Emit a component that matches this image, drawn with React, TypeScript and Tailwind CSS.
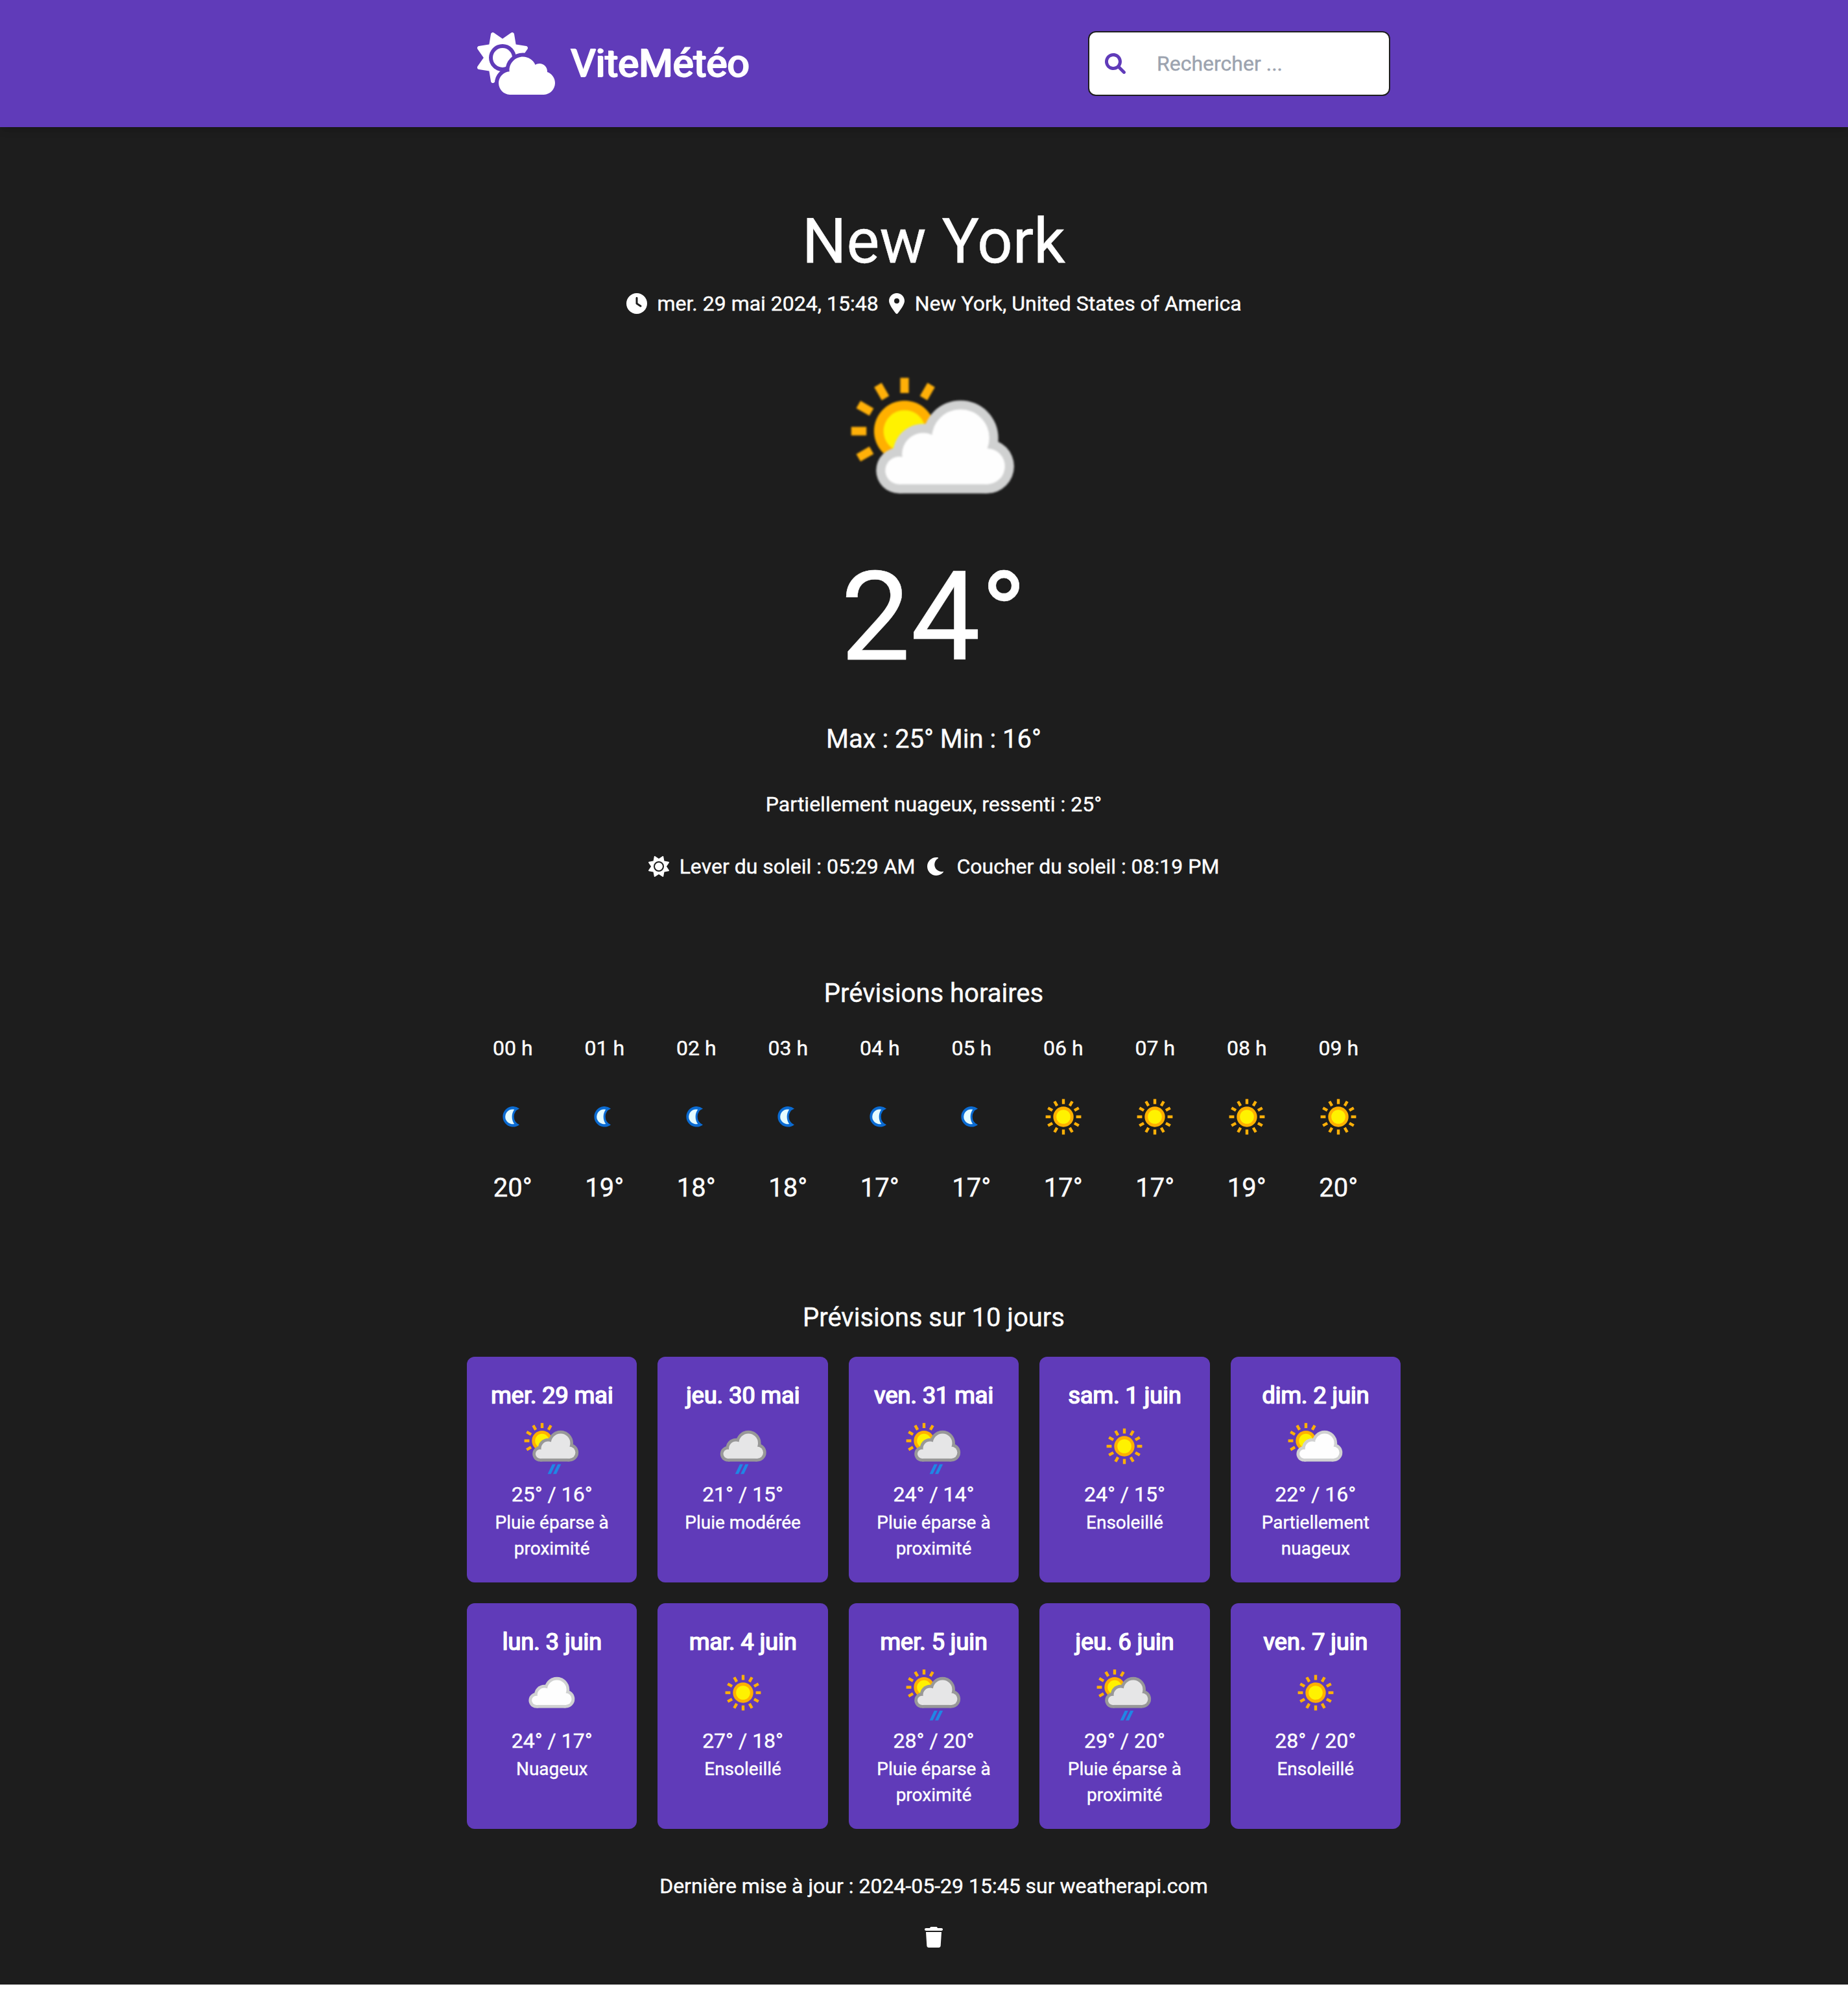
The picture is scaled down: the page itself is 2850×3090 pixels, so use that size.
import React from "react";
import { FaClock, FaLocationDot, FaSun, FaTrash } from "react-icons/fa6";

type Condition = "partly" | "showers" | "rain" | "cloudy" | "sunny" | "clear-night";

const ALL_RAYS = [0, 30, 60, 90, 120, 150, 180, 210, 240, 270, 300, 330];
const LEFT_RAYS = [0, 30, 240, 270, 300, 330];

const LOGO_CLOUD =
  "M575.2 325.7c.2-1.9.8-3.7.8-5.6 0-35.3-28.7-64-64-64-12.6 0-24.2 3.8-34.1 10-17.6-38.8-56.5-66-101.9-66-61.8 0-112 50.1-112 112 0 3 .7 5.8.9 8.7-49.6 3.7-88.9 44.7-88.9 95.3 0 53 43 96 96 96h272c53 0 96-43 96-96 0-42.1-27.2-77.4-64.8-90.4z";

function LogoIcon({ className }: { className: string }) {
  return (
    <svg viewBox="0 0 640 512" fill="currentColor" className={className}>
      <mask id="logo-sun" maskUnits="userSpaceOnUse" x="0" y="0" width="640" height="512">
        <rect width="640" height="512" fill="white" />
        <circle cx="208" cy="208" r="112" fill="black" />
        <circle cx="208" cy="208" r="80" fill="white" />
        <path d={LOGO_CLOUD} fill="black" stroke="black" strokeWidth="64" />
      </mask>
      <path
        mask="url(#logo-sun)"
        d="M294.2 1.2c5.1 2.1 8.7 6.7 9.6 12.1l14.1 84.7 84.7 14.1c5.4.9 10 4.5 12.1 9.6s1.5 10.9-1.6 15.4L363.5 208l49.6 70.8c3.1 4.5 3.7 10.3 1.6 15.4s-6.7 8.7-12.1 9.6l-84.7 14.1-14.1 84.7c-.9 5.4-4.5 10-9.6 12.1s-10.9 1.5-15.4-1.6L208 363.5l-70.8 49.6c-4.5 3.2-10.3 3.8-15.4 1.6s-8.7-6.7-9.6-12.1L98.1 317.9 13.4 303.8c-5.4-.9-10-4.5-12.1-9.6s-1.5-10.9 1.6-15.4L52.5 208 2.9 137.2c-3.2-4.5-3.8-10.3-1.6-15.4s6.7-8.7 12.1-9.6L98.1 98.1l14.1-84.7c.9-5.4 4.5-10 9.6-12.1s10.9-1.5 15.4 1.6L208 52.5 278.8 2.9c4.5-3.2 10.3-3.8 15.4-1.7z"
      />
      <path d={LOGO_CLOUD} />
    </svg>
  );
}

function SearchIcon({ className }: { className: string }) {
  return (
    <svg viewBox="0 0 512 512" fill="currentColor" className={className}>
      <path d="M500.3 443.7l-119.7-119.7c27.22-40.41 40.65-90.9 33.46-144.7C401.8 87.79 326.8 13.32 235.2 1.723C99.01-15.51-15.51 99.01 1.724 235.2c11.6 91.64 86.08 166.7 177.6 178.9c53.8 7.189 104.3-6.236 144.7-33.46l119.7 119.7c15.62 15.62 40.95 15.62 56.57 0C515.9 484.7 515.9 459.3 500.3 443.7zM79.1 208c0-70.58 57.42-128 128-128s128 57.42 128 128c0 70.58-57.42 128-128 128S79.1 278.6 79.1 208z" />
    </svg>
  );
}

function MoonIcon({ className }: { className: string }) {
  return (
    <svg viewBox="0 0 512 512" fill="currentColor" className={className}>
      <path d="M32 256c0-123.8 100.3-224 223.8-224c11.36 0 29.7 1.668 40.9 3.746c9.616 1.777 11.75 14.63 3.279 19.44C245 86.5 211.2 144.6 211.2 207.8c0 109.7 99.71 193 208.3 172.3c9.561-1.805 16.28 9.324 10.11 16.95C387.9 448.6 324.8 480 255.8 480C132.1 480 32 379.6 32 256z" />
    </svg>
  );
}

function SunShape({ cx, cy, rays }: { cx: number; cy: number; rays: number[] }) {
  return (
    <g>
      {rays.map((a) => (
        <rect
          key={a}
          x={cx - 1.1}
          y={cy - 13.7}
          width={2.2}
          height={3.9}
          fill="#ffb008"
          transform={`rotate(${a} ${cx} ${cy})`}
        />
      ))}
      <circle cx={cx} cy={cy} r={7.85} fill="#ffb000" />
      <circle cx={cx} cy={cy} r={5.4} fill="#fff200" />
    </g>
  );
}

function CloudShape({ dx, rim, fill }: { dx: number; rim: string; fill: string }) {
  return (
    <g transform={`translate(${dx} 0)`}>
      <g fill={rim}>
        <circle cx={23} cy={37.9} r={5.9} />
        <circle cx={29.2} cy={33.7} r={7.8} />
        <circle cx={38.8} cy={29.6} r={9.7} />
        <circle cx={45.6} cy={36.85} r={6.95} />
        <rect x={23} y={35} width={22.6} height={8.8} />
      </g>
      <g fill={fill}>
        <circle cx={23} cy={37.9} r={3.55} />
        <circle cx={29.2} cy={33.7} r={5.45} />
        <circle cx={38.8} cy={29.6} r={7.4} />
        <circle cx={45.6} cy={36.85} r={4.6} />
        <rect x={23} y={35} width={22.6} height={6.45} />
      </g>
    </g>
  );
}

function Rain({ dx }: { dx: number }) {
  return (
    <g fill="#1f87e5" transform={`translate(${dx} 0)`}>
      <path d="M32.4 45.9h2.5l-3.6 7.5h-2.5z" />
      <path d="M36.6 45.9h2.5l-3.6 7.5h-2.5z" />
    </g>
  );
}

function WeatherIcon({ kind, className }: { kind: Condition; className: string }) {
  return (
    <svg viewBox="0 0 64 64" className={className}>
      {kind === "sunny" && <SunShape cx={32} cy={32} rays={ALL_RAYS} />}
      {(kind === "partly" || kind === "showers") && (
        <SunShape cx={24.5} cy={27.8} rays={LEFT_RAYS} />
      )}
      {kind === "partly" && <CloudShape dx={0.1} rim="#d0d1d1" fill="#fefefe" />}
      {kind === "cloudy" && <CloudShape dx={-2.9} rim="#d0d1d1" fill="#fefefe" />}
      {kind === "showers" && (
        <>
          <CloudShape dx={0} rim="#989898" fill="#e6e6e7" />
          <Rain dx={0} />
        </>
      )}
      {kind === "rain" && (
        <>
          <CloudShape dx={-2.7} rim="#989898" fill="#e6e6e7" />
          <Rain dx={-2.9} />
        </>
      )}
      {kind === "clear-night" && (
        <>
          <path d="M37 25.7A7.9 7.9 0 1 0 37 38.1A6.7 6.7 0 0 1 37 25.7z" fill="#0b6bd2" />
          <path d="M33.1 26.4A5.7 5.7 0 1 0 33.1 37.5A9.5 9.5 0 0 1 33.1 26.4z" fill="#e4fbff" />
        </>
      )}
    </svg>
  );
}

const hours: { h: string; t: number; kind: Condition }[] = [
  { h: "00", t: 20, kind: "clear-night" },
  { h: "01", t: 19, kind: "clear-night" },
  { h: "02", t: 18, kind: "clear-night" },
  { h: "03", t: 18, kind: "clear-night" },
  { h: "04", t: 17, kind: "clear-night" },
  { h: "05", t: 17, kind: "clear-night" },
  { h: "06", t: 17, kind: "sunny" },
  { h: "07", t: 17, kind: "sunny" },
  { h: "08", t: 19, kind: "sunny" },
  { h: "09", t: 20, kind: "sunny" },
];

const days: { day: string; hi: number; lo: number; text: string; kind: Condition }[] = [
  { day: "mer. 29 mai", hi: 25, lo: 16, text: "Pluie éparse à proximité", kind: "showers" },
  { day: "jeu. 30 mai", hi: 21, lo: 15, text: "Pluie modérée", kind: "rain" },
  { day: "ven. 31 mai", hi: 24, lo: 14, text: "Pluie éparse à proximité", kind: "showers" },
  { day: "sam. 1 juin", hi: 24, lo: 15, text: "Ensoleillé", kind: "sunny" },
  { day: "dim. 2 juin", hi: 22, lo: 16, text: "Partiellement nuageux", kind: "partly" },
  { day: "lun. 3 juin", hi: 24, lo: 17, text: "Nuageux", kind: "cloudy" },
  { day: "mar. 4 juin", hi: 27, lo: 18, text: "Ensoleillé", kind: "sunny" },
  { day: "mer. 5 juin", hi: 28, lo: 20, text: "Pluie éparse à proximité", kind: "showers" },
  { day: "jeu. 6 juin", hi: 29, lo: 20, text: "Pluie éparse à proximité", kind: "showers" },
  { day: "ven. 7 juin", hi: 28, lo: 20, text: "Ensoleillé", kind: "sunny" },
];

function Header() {
  return (
    <header className="relative z-10 h-[196px] bg-[#603bb9] shadow-[0_8px_12px_-2px_rgba(0,0,0,0.1),0_4px_8px_-4px_rgba(0,0,0,0.1)]">
      <div className="ml-[720px] flex h-full w-[1440px] items-center justify-between px-4">
        <div className="flex items-center gap-6">
          <LogoIcon className="h-24 w-[120px]" />
          <span className="text-[60px] leading-[72px] tracking-[0.15px] [-webkit-text-stroke:1.8px_white] [text-shadow:1px_0_white,2px_0_white]">
            ViteMétéo
          </span>
        </div>
        <div className="flex h-[100px] w-[466px] items-center gap-12 rounded-xl border-2 border-[#1e1e1e] bg-white px-6">
          <SearchIcon className="h-8 w-8 shrink-0 text-[#603bb9]" />
          <input
            type="text"
            placeholder="Rechercher ..."
            className="min-w-0 flex-1 bg-transparent text-[32px] leading-[48px] text-black outline-none placeholder:text-[#9ca3af]"
          />
        </div>
      </div>
    </header>
  );
}

export default function App() {
  return (
    <div className="h-[3090px] w-full overflow-hidden bg-white">
      <div className="h-[3060px] bg-[#1d1d1d] text-[32px] leading-[48px] text-white [font-family:Roboto,sans-serif] [-webkit-text-stroke:0.4px_currentColor]">
        <Header />
        <main className="ml-[720px] flex w-[1440px] flex-col items-center pt-32">
          <h1 className="text-[96px] leading-[96px]">New York</h1>
          <div className="mt-6 flex items-center">
            <FaClock className="mr-[15px] ml-px h-8 w-8" />
            <span className="mr-4">mer. 29 mai 2024, 15:48</span>
            <FaLocationDot className="mr-4 h-8 w-6" />
            <span>New York, United States of America</span>
          </div>
          <div className="mt-12 mb-4 flex h-[300px] items-center">
            <WeatherIcon kind="partly" className="size-[384px] blur-[1.6px]" />
          </div>
          <p className="text-[192px] leading-[192px]">24°</p>
          <p className="mt-16 text-[40px] leading-[56px]">Max : 25° Min : 16°</p>
          <p className="mt-12">Partiellement nuageux, ressenti : 25°</p>
          <div className="mt-12 flex items-center">
            <FaSun className="mr-4 h-8 w-8" />
            <span className="mr-4">Lever du soleil : 05:29 AM</span>
            <MoonIcon className="mr-[15px] ml-px h-8 w-8" />
            <span>Coucher du soleil : 08:19 PM</span>
          </div>

          <h2 className="mt-36 text-[40px] leading-[56px]">Prévisions horaires</h2>
          <div className="mt-8 grid w-[1415px] grid-cols-10 self-start">
            {hours.map(({ h, t, kind }) => (
              <div key={h} className="flex flex-col items-center">
                <span>{h} h</span>
                <WeatherIcon kind={kind} className="my-[18px] size-32 blur-[0.5px]" />
                <span className="text-[40px] leading-[56px]">{t}°</span>
              </div>
            ))}
          </div>

          <h2 className="mt-36 text-[40px] leading-[56px]">Prévisions sur 10 jours</h2>
          <div className="mt-8 grid w-full grid-cols-5 gap-8">
            {days.map(({ day, hi, lo, text, kind }) => (
              <div
                key={day}
                className="flex h-[348px] flex-col items-center rounded-xl bg-[#603bb9] p-8 text-center"
              >
                <h3 className="text-[36px] leading-[56px] whitespace-nowrap [-webkit-text-stroke:1.2px_white] [text-shadow:1px_0_white]">
                  {day}
                </h3>
                <div className="flex h-[100px] items-center">
                  <WeatherIcon kind={kind} className="size-32 blur-[0.5px]" />
                </div>
                <p>
                  {hi}° / {lo}°
                </p>
                <p className="text-[28px] leading-10">{text}</p>
              </div>
            ))}
          </div>

          <p className="mt-16">Dernière mise à jour : 2024-05-29 15:45 sur weatherapi.com</p>
          <FaTrash className="mt-[39px] h-8 w-7" />
        </main>
      </div>
    </div>
  );
}
